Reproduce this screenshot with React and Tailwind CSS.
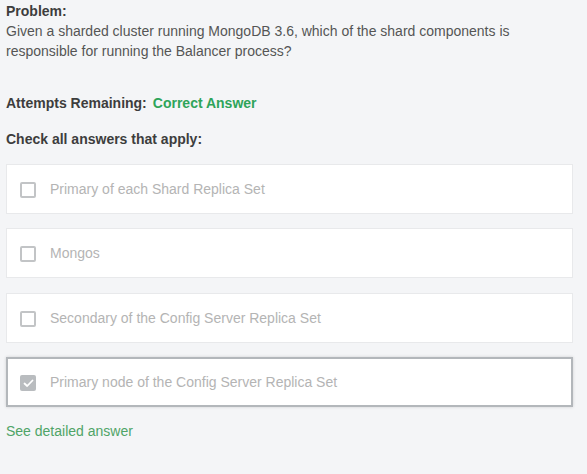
import React from "react";

const options = [
  { label: "Primary of each Shard Replica Set", checked: false, mt: "" },
  { label: "Mongos", checked: false, mt: "mt-[14px]" },
  { label: "Secondary of the Config Server Replica Set", checked: false, mt: "mt-[15px]" },
  { label: "Primary node of the Config Server Replica Set", checked: true, mt: "mt-[14px]" },
];

function Box({ checked }) {
  if (checked) {
    return (
      <div className="w-[16px] h-[16px] rounded-[2px] bg-[#b9bcbf] flex items-center justify-center shrink-0">
        <svg width="11" height="9" viewBox="0 0 11 9" fill="none">
          <path d="M1.5 4.5 L4.2 7 L9.5 1.5" stroke="white" strokeWidth="1.8" strokeLinecap="round" strokeLinejoin="round" />
        </svg>
      </div>
    );
  }
  return <div className="w-[16px] h-[16px] rounded-[2px] border-2 border-[#c2c4c6] bg-white shrink-0" />;
}

export default function App() {
  return (
    <div className="w-[587px] h-[474px] bg-[#f4f5f7] text-[14px] leading-[20px] text-[#4a4a4a] pl-[6px] pt-[1px]" style={{ fontFamily: '"Liberation Sans", Arial, sans-serif' }}>
      <div className="font-bold text-[#3d3d3d]">Problem:</div>
      <div className="w-[560px] text-[#555]">
        Given a sharded cluster running MongoDB 3.6, which of the shard components is responsible for running the Balancer process?
      </div>
      <div className="mt-[32px] font-bold text-[#3d3d3d] flex gap-[6px]">
        <span>Attempts Remaining:</span>
        <span className="text-[#2ea45a]">Correct Answer</span>
      </div>
      <div className="mt-[16px] font-bold text-[#3d3d3d]">Check all answers that apply:</div>
      <div className="mt-[15px] w-[567px] flex flex-col">
        {options.map((o, i) => (
          <div
            key={i}
            className={
              o.checked
                ? `${o.mt} h-[50px] bg-white border-2 border-[#b3b7bb] shadow-[0_0_3px_rgba(0,0,0,0.15)] flex items-center pl-[12px] gap-[14px]`
                : `${o.mt} h-[50px] bg-white border border-[#e8e9eb] flex items-center pl-[13px] gap-[14px]`
            }
          >
            <div className="mt-[2px]"><Box checked={o.checked} /></div>
            <span className="text-[#b4b4b4]">{o.label}</span>
          </div>
        ))}
      </div>
      <div className="mt-[14px] text-[#4fa467]">See detailed answer</div>
    </div>
  );
}
